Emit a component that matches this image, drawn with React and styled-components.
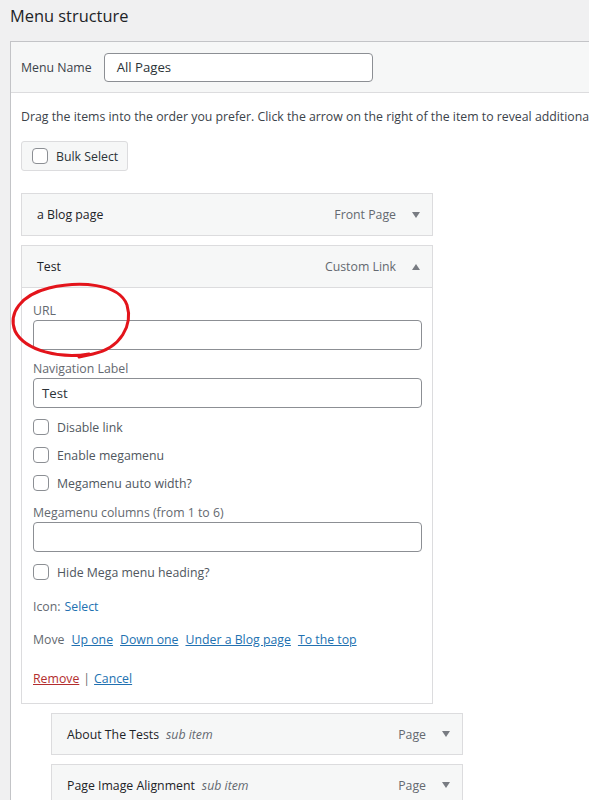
import styled, { createGlobalStyle } from "styled-components";

const GlobalStyle = createGlobalStyle`
  body {
    margin: 0;
    background: #f0f0f1;
    font-family: "Open Sans", "Noto Sans", sans-serif;
    font-size: 12.3px;
    color: #3c434a;
    overflow: hidden;
  }
`;

const Page = styled.div`
  padding-left: 10px;
  width: 820px;
`;

const Heading = styled.h2`
  margin: 0;
  padding-top: 5px;
  font-size: 16.4px;
  line-height: 22px;
  font-weight: 400;
  color: #1d2327;
`;

const Panel = styled.div`
  margin-top: 14px;
  border: 1px solid #c3c4c7;
  background: #fff;
  width: 780px;
`;

const PanelHeader = styled.div`
  display: flex;
  align-items: center;
  gap: 12px;
  height: 50px;
  padding: 0 10px;
  background: #f6f7f7;
  border-bottom: 1px solid #dcdcde;
`;

const HeaderLabel = styled.span`
  color: #3c434a;
`;

const TextInput = styled.div`
  box-sizing: border-box;
  width: ${(p) => p.width || "100%"};
  height: ${(p) => p.height || 30}px;
  display: flex;
  align-items: center;
  padding: 0 ${(p) => p.pad || 8}px;
  border: 1px solid #8c8f94;
  border-radius: 4px;
  background: #fff;
  font-size: 13.2px;
  color: #2c3338;
`;

const PanelBody = styled.div`
  padding: 15px 10px 0;
`;

const Instructions = styled.p`
  margin: 0;
  line-height: 18px;
  white-space: nowrap;
`;

const BulkButton = styled.div`
  margin-top: 15px;
  box-sizing: border-box;
  display: inline-flex;
  align-items: center;
  gap: 8px;
  height: 30px;
  width: 107px;
  padding-left: 10px;
  background: #f6f7f7;
  border: 1px solid #dcdcde;
  border-radius: 3px;
  color: #2c3338;
`;

const Check = styled.span`
  box-sizing: border-box;
  flex: none;
  width: 16px;
  height: 16px;
  border: 1px solid #8c8f94;
  border-radius: 4px;
  background: #fff;
`;

const ItemList = styled.div`
  margin-top: 22px;
  display: flex;
  flex-direction: column;
  gap: 9px;
  padding-bottom: 40px;
`;

const ItemWrap = styled.div`
  width: 412px;
  margin-left: ${(p) => (p.depth ? 30 : 0)}px;
`;

const ItemBar = styled.div`
  box-sizing: border-box;
  height: ${(p) => (p.depth ? 42 : 43)}px;
  display: flex;
  align-items: center;
  padding: 0 12px 0 15px;
  background: #f6f7f7;
  border: 1px solid #dcdcde;
`;

const ItemTitle = styled.span`
  flex: 1;
  font-weight: 500;
  color: #1d2327;
`;

const SubLabel = styled.span`
  margin-left: 7px;
  font-weight: 400;
  font-style: italic;
  color: #646970;
`;

const ItemType = styled.span`
  color: #646970;
  margin-right: 16px;
`;

const Arrow = styled.span`
  width: 0;
  height: 0;
  border-left: 4.5px solid transparent;
  border-right: 4.5px solid transparent;
  ${(p) =>
    p.up
      ? "border-bottom: 6px solid #787c82;"
      : "border-top: 6px solid #787c82;"}
`;

const ItemSettings = styled.div`
  position: relative;
  box-sizing: border-box;
  padding: 14px 10px 15px 11px;
  border: 1px solid #dcdcde;
  border-top: none;
  background: #fff;
`;

const Field = styled.div`
  margin-top: ${(p) => p.gap || 0}px;
`;

const FieldLabel = styled.div`
  line-height: 18px;
  color: #646970;
`;

const CheckRow = styled.div`
  display: flex;
  align-items: center;
  gap: 8px;
  height: 28px;
  margin-top: ${(p) => p.gap || 0}px;
  color: #50575e;
`;

const Line = styled.div`
  display: flex;
  align-items: center;
  gap: ${(p) => p.spacing || 0}px;
  line-height: 18px;
  margin-top: ${(p) => p.gap || 0}px;
  color: #646970;
`;

const Link = styled.a`
  color: ${(p) => (p.danger ? "#b32d2e" : "#2271b1")};
  text-decoration: ${(p) => (p.plain ? "none" : "underline")};
  cursor: pointer;
`;

const Pipe = styled.span`
  margin: 0 4px;
  color: #646970;
`;

// hand-drawn red loop around the URL field
const Scribble = styled.svg`
  position: absolute;
  left: -21px;
  top: -287px;
  width: 140px;
  height: 380px;
  pointer-events: none;
  overflow: visible;
`;

const MenuItem = ({ title, type, depth, open, children }) => (
  <ItemWrap depth={depth}>
    <ItemBar depth={depth}>
      <ItemTitle>
        {title}
        {depth ? <SubLabel>sub item</SubLabel> : null}
      </ItemTitle>
      <ItemType>{type}</ItemType>
      <Arrow up={open} />
    </ItemBar>
    {open ? children : null}
  </ItemWrap>
);

const App = () => {
  return (
    <Page>
      <GlobalStyle />
      <Heading>Menu structure</Heading>
      <Panel>
        <PanelHeader>
          <HeaderLabel>Menu Name</HeaderLabel>
          <TextInput width="269px" height={29} pad={12}>
            All Pages
          </TextInput>
        </PanelHeader>
        <PanelBody>
          <Instructions>
            Drag the items into the order you prefer. Click the arrow on the
            right of the item to reveal additional configuration options.
          </Instructions>
          <BulkButton>
            <Check />
            Bulk Select
          </BulkButton>
          <ItemList>
            <MenuItem title="a Blog page" type="Front Page" />
            <MenuItem title="Test" type="Custom Link" open>
              <ItemSettings>
                <Scribble viewBox="0 0 140 380">
                  <path
                    d="M88 353 C60 358 24 350 14 330 C7 312 20 294 48 287 C78 280 118 282 126 304 C132 324 120 347 92 353 L78 356"
                    fill="none"
                    stroke="#e3141b"
                    strokeWidth="3"
                    strokeLinecap="round"
                  />
                </Scribble>
                <Field>
                  <FieldLabel>URL</FieldLabel>
                  <TextInput />
                </Field>
                <Field gap={10}>
                  <FieldLabel>Navigation Label</FieldLabel>
                  <TextInput>Test</TextInput>
                </Field>
                <CheckRow gap={5}>
                  <Check />
                  Disable link
                </CheckRow>
                <CheckRow>
                  <Check />
                  Enable megamenu
                </CheckRow>
                <CheckRow>
                  <Check />
                  Megamenu auto width?
                </CheckRow>
                <Field gap={7}>
                  <FieldLabel>Megamenu columns (from 1 to 6)</FieldLabel>
                  <TextInput />
                </Field>
                <CheckRow gap={6}>
                  <Check />
                  Hide Mega menu heading?
                </CheckRow>
                <Line gap={12} spacing={4}>
                  Icon: <Link plain>Select</Link>
                </Line>
                <Line gap={15} spacing={7}>
                  Move
                  <Link>Up one</Link>
                  <Link>Down one</Link>
                  <Link>Under a Blog page</Link>
                  <Link>To the top</Link>
                </Line>
                <Line gap={21}>
                  <Link danger>Remove</Link>
                  <Pipe>|</Pipe>
                  <Link>Cancel</Link>
                </Line>
              </ItemSettings>
            </MenuItem>
            <MenuItem title="About The Tests" type="Page" depth={1} />
            <MenuItem title="Page Image Alignment" type="Page" depth={1} />
          </ItemList>
        </PanelBody>
      </Panel>
    </Page>
  );
};

export default App;
